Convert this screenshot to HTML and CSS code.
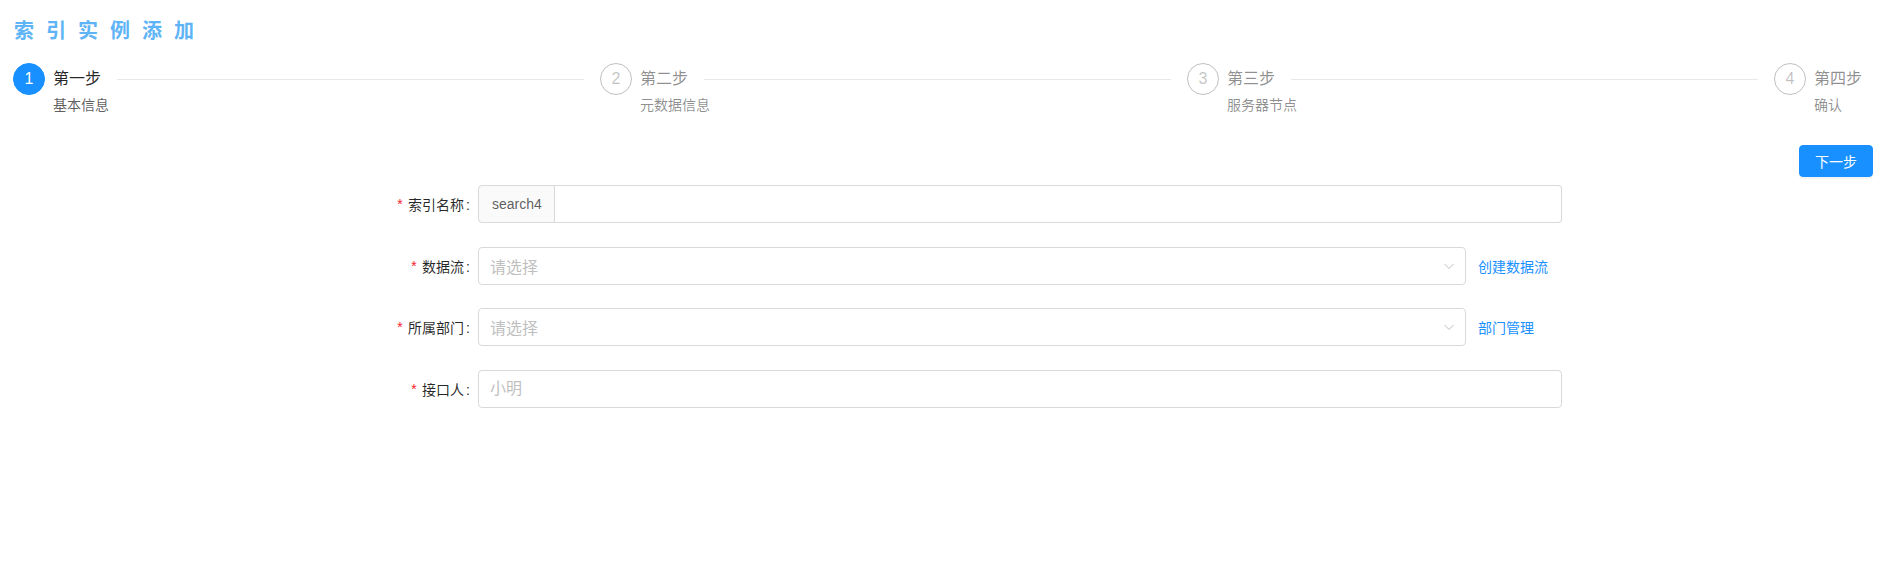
FILE: index.html
```html
<!DOCTYPE html>
<html lang="zh-CN">
<head>
<meta charset="utf-8">
<title>索引实例添加</title>
<link rel="stylesheet" href="styles.css">
</head>
<body>
<div class="page">
  <h1 class="page-title">索引实例添加</h1>

  <div class="steps">
    <div class="step step-process">
      <div class="step-icon">1</div>
      <div class="step-content">
        <div class="step-head"><span class="step-title">第一步</span><span class="step-line"></span></div>
        <div class="step-desc">基本信息</div>
      </div>
    </div>
    <div class="step">
      <div class="step-icon">2</div>
      <div class="step-content">
        <div class="step-head"><span class="step-title">第二步</span><span class="step-line"></span></div>
        <div class="step-desc">元数据信息</div>
      </div>
    </div>
    <div class="step">
      <div class="step-icon">3</div>
      <div class="step-content">
        <div class="step-head"><span class="step-title">第三步</span><span class="step-line"></span></div>
        <div class="step-desc">服务器节点</div>
      </div>
    </div>
    <div class="step step-last">
      <div class="step-icon">4</div>
      <div class="step-content">
        <div class="step-head"><span class="step-title">第四步</span></div>
        <div class="step-desc">确认</div>
      </div>
    </div>
  </div>

  <div class="toolbar">
    <button class="btn-primary" type="button">下一步</button>
  </div>

  <form class="form">
    <div class="form-item">
      <label class="form-label"><span class="req">*</span>索引名称<span class="colon">:</span></label>
      <div class="form-control">
        <div class="input-group">
          <span class="addon">search4</span>
          <input class="input input-grouped" type="text">
        </div>
      </div>
    </div>

    <div class="form-item">
      <label class="form-label"><span class="req">*</span>数据流<span class="colon">:</span></label>
      <div class="form-control">
        <div class="select-row">
          <div class="select">
            <span class="placeholder">请选择</span>
            <svg class="arrow" width="12" height="12" viewBox="0 0 12 12"><path d="M1.5 4 L6 8.5 L10.5 4" fill="none" stroke="#bfbfbf" stroke-width="1"/></svg>
          </div>
          <a class="link" href="#">创建数据流</a>
        </div>
      </div>
    </div>

    <div class="form-item">
      <label class="form-label"><span class="req">*</span>所属部门<span class="colon">:</span></label>
      <div class="form-control">
        <div class="select-row">
          <div class="select">
            <span class="placeholder">请选择</span>
            <svg class="arrow" width="12" height="12" viewBox="0 0 12 12"><path d="M1.5 4 L6 8.5 L10.5 4" fill="none" stroke="#bfbfbf" stroke-width="1"/></svg>
          </div>
          <a class="link" href="#">部门管理</a>
        </div>
      </div>
    </div>

    <div class="form-item">
      <label class="form-label"><span class="req">*</span>接口人<span class="colon">:</span></label>
      <div class="form-control">
        <input class="input" type="text" placeholder="小明">
      </div>
    </div>
  </form>
</div>
</body>
</html>
```

FILE: styles.css
```css
* { box-sizing: border-box; }

body {
  margin: 0;
  background: #fff;
  font-family: "Liberation Sans", "Noto Sans CJK SC", sans-serif;
  color: rgba(0, 0, 0, 0.65);
  font-size: 14px;
}

.page {
  padding: 17px 12px 0 13px;
}

.page-title {
  margin: 0;
  font-size: 20px;
  line-height: 28px;
  font-weight: 700;
  letter-spacing: 12px;
  color: #5eb4f6;
  padding-left: 1px;
}

/* Steps */
.steps {
  display: flex;
  margin-top: 18px;
}

.step {
  flex: 1;
  display: flex;
  margin-right: 16px;
  min-width: 0;
}

.step-last {
  flex: none;
  margin-right: 0;
}

.step-icon {
  flex: none;
  width: 32px;
  height: 32px;
  border-radius: 50%;
  border: 1px solid rgba(0, 0, 0, 0.25);
  color: rgba(0, 0, 0, 0.25);
  display: flex;
  align-items: center;
  justify-content: center;
  font-size: 16px;
  margin-right: 8px;
}

.step-process .step-icon {
  background: #1890ff;
  border-color: #1890ff;
  color: #fff;
}

.step-content {
  flex: 1;
  min-width: 0;
}

.step-head {
  display: flex;
  align-items: center;
  height: 32px;
}

.step-title {
  font-size: 16px;
  line-height: 32px;
  padding-right: 16px;
  color: rgba(0, 0, 0, 0.45);
  white-space: nowrap;
}

.step-process .step-title {
  color: rgba(0, 0, 0, 0.85);
}

.step-line {
  flex: 1;
  height: 1px;
  background: #e8e8e8;
}

.step-desc {
  font-size: 14px;
  line-height: 20px;
  color: rgba(0, 0, 0, 0.45);
}

.step-process .step-desc {
  color: rgba(0, 0, 0, 0.65);
}

/* Toolbar */
.toolbar {
  display: flex;
  justify-content: flex-end;
  margin-top: 30px;
  padding-right: 5px;
}

.btn-primary {
  height: 32px;
  padding: 0 15px;
  border: 1px solid #1890ff;
  border-radius: 4px;
  background: #1890ff;
  color: #fff;
  font-family: inherit;
  font-size: 14px;
  box-shadow: 0 2px 0 rgba(0, 0, 0, 0.045);
}

/* Form */
.form {
  margin-top: 8px;
}

.form-item {
  display: flex;
  align-items: center;
  height: 38px;
  margin-bottom: 23.5px;
}

.form-label {
  width: 465px;
  flex: none;
  text-align: right;
  font-size: 14px;
  color: rgba(0, 0, 0, 0.85);
  white-space: nowrap;
}

.req {
  color: #f5222d;
  font-family: "Liberation Mono", monospace;
  font-size: 14px;
  margin-right: 4px;
}

.colon {
  margin: 0 8px 0 2px;
}

.form-control {
  width: 1084px;
  flex: none;
}

.input-group {
  display: flex;
  height: 38px;
}

.addon {
  display: flex;
  align-items: center;
  padding: 0 12px 0 13px;
  background: #fafafa;
  border: 1px solid #d9d9d9;
  border-radius: 4px 0 0 4px;
  color: rgba(0, 0, 0, 0.65);
  font-size: 14px;
}

.input {
  width: 100%;
  height: 38px;
  padding: 0 11px;
  border: 1px solid #d9d9d9;
  border-radius: 4px;
  font-family: inherit;
  font-size: 16px;
  color: rgba(0, 0, 0, 0.65);
  outline: none;
  background: #fff;
}

.input::placeholder {
  color: #bfbfbf;
}

.input-grouped {
  flex: 1;
  border-left: 0;
  border-radius: 0 4px 4px 0;
}

.select-row {
  display: flex;
  align-items: center;
}

.select {
  width: calc(100% - 96px);
  height: 38px;
  display: flex;
  align-items: center;
  justify-content: space-between;
  padding: 0 10px 0 11px;
  border: 1px solid #d9d9d9;
  border-radius: 4px;
  background: #fff;
}

.placeholder {
  font-size: 16px;
  color: #bfbfbf;
}

.arrow {
  display: block;
}

.link {
  margin-left: 12px;
  color: #1890ff;
  text-decoration: none;
  font-size: 14px;
}
```
